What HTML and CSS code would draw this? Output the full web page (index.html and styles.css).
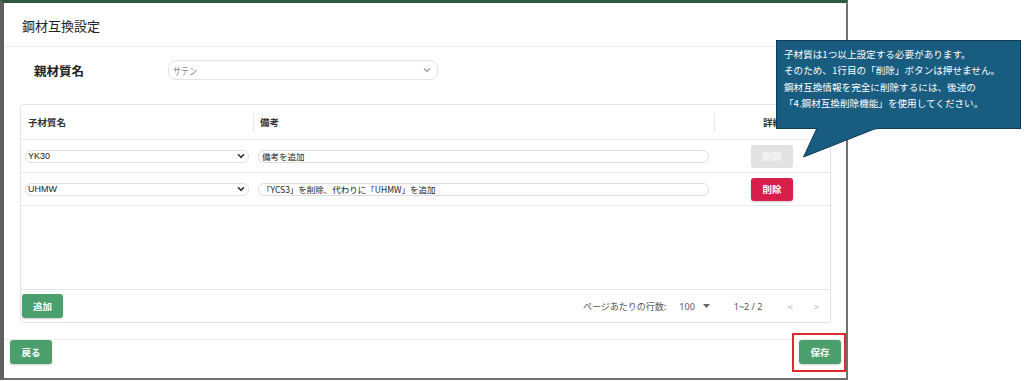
FILE: index.html
```html
<!DOCTYPE html>
<html lang="ja">
<head>
<meta charset="utf-8">
<link rel="stylesheet" href="styles.css">
</head>
<body>
<div class="page">
  <div class="screen">
    <div class="dialog">
      <div class="dlg-head">鋼材互換設定</div>
      <div class="parent-row">
        <div class="parent-label">親材質名</div>
        <div class="parent-select">
          <span class="ph">サテン</span>
          <svg class="chev" width="8" height="6" viewBox="0 0 8 6"><path d="M1 1.5 L4 4.5 L7 1.5" fill="none" stroke="#999" stroke-width="1.2"/></svg>
        </div>
      </div>
      <div class="card">
        <div class="trow thead">
          <div class="c1"><span>子材質名</span></div>
          <div class="c2"><span>備考</span></div>
          <div class="c3"><span>詳細</span></div>
        </div>
        <div class="trow">
          <div class="c1"><div class="sel">YK30<svg class="chev2" width="8" height="6" viewBox="0 0 8 6"><path d="M1 1.2 L4 4.4 L7 1.2" fill="none" stroke="#333" stroke-width="1.6"/></svg></div></div>
          <div class="c2"><div class="inp">備考を追加</div></div>
          <div class="c3"><button class="btn btn-disabled">削除</button></div>
        </div>
        <div class="trow">
          <div class="c1"><div class="sel">UHMW<svg class="chev2" width="8" height="6" viewBox="0 0 8 6"><path d="M1 1.2 L4 4.4 L7 1.2" fill="none" stroke="#333" stroke-width="1.6"/></svg></div></div>
          <div class="c2"><div class="inp">「YCS3」を削除、代わりに「UHMW」を追加</div></div>
          <div class="c3"><button class="btn btn-red">削除</button></div>
        </div>
        <div class="empty"></div>
        <div class="tfoot">
          <button class="btn btn-green">追加</button>
          <div class="pager">
            <span class="rpp">ページあたりの行数:</span>
            <span class="num">100</span>
            <svg width="7" height="4" viewBox="0 0 7 4"><path d="M0 0 L7 0 L3.5 4 Z" fill="#666"/></svg>
            <span class="range">1~2 / 2</span>
            <span class="nav">&lt;</span>
            <span class="nav last">&gt;</span>
          </div>
        </div>
      </div>
      <div class="dlg-foot">
        <button class="btn btn-green">戻る</button>
        <button class="btn btn-green">保存</button>
      </div>
    </div>
  </div>
  <div class="callout">
    <p>子材質は1つ以上設定する必要があります。</p>
    <p>そのため、1行目の「削除」ボタンは押せません。</p>
    <p>鋼材互換情報を完全に削除するには、後述の</p>
    <p>「4.鋼材互換削除機能」を使用してください。</p>
    <svg class="tail" width="80" height="32" viewBox="0 0 80 32"><path d="M14 0 L0.5 29 L74 0" fill="#185c80" stroke="#0f3b55" stroke-width="1"/><rect x="14.5" y="0" width="59" height="1.5" fill="#185c80"/></svg>
  </div>
  <div class="highlight"></div>
</div>
</body>
</html>
```
FILE: styles.css
```css
* { box-sizing: border-box; }
html, body { margin: 0; padding: 0; background: #fff; }
body { font-family: "Noto Sans CJK JP", "Noto Sans", sans-serif; color: #222; }

.page { position: relative; width: 1024px; height: 381px; }

.screen {
  width: 848px;
  height: 380px;
  border-top: 3px solid #2c5a3a;
  border-left: 4px solid #606060;
  border-right: 2px solid #707070;
  border-bottom: 2px solid #707070;
  background: #fff;
}

.dialog { display: flex; flex-direction: column; height: 100%; }

.dlg-head {
  height: 44px;
  padding: 2px 0 0 18px;
  display: flex;
  align-items: center;
  font-size: 13px;
  color: #222;
  border-bottom: 1px solid #eee;
}

.parent-row {
  display: flex;
  align-items: center;
  height: 45px;
  padding: 1px 0 0 30px;
  margin-bottom: 12px;
}
.parent-label { font-size: 12.5px; font-weight: bold; width: 134px; }
.parent-select {
  width: 270px;
  height: 20px;
  border: 1px solid #e4e4e4;
  border-radius: 8px;
  display: flex;
  align-items: center;
  justify-content: space-between;
  padding: 0 6px 0 4px;
}
.parent-select .ph { font-size: 10px; color: #888; transform: scaleX(0.8); transform-origin: left; }

.card {
  margin: 0 15px 0 16px;
  border: 1px solid #e3e3e3;
  border-radius: 3px;
  display: flex;
  flex-direction: column;
  height: 219px;
}

.trow { display: flex; height: 33px; border-bottom: 1px solid #e8e8e8; align-items: center; }
.thead { height: 35px; font-size: 9.5px; font-weight: bold; color: #333; }
.c1 { width: 232px; padding-left: 4px; }
.c2 { flex: 1; padding-left: 5px; padding-right: 5px; }
.c3 { width: 116px; display: flex; justify-content: center; }
.thead .c1 { padding-left: 7px; }
.thead .c2 { border-left: 1px solid #e8e8e8; padding-left: 6px; height: 17px; display: flex; align-items: center; }
.thead .c3 { border-left: 1px solid #e8e8e8; height: 17px; align-items: center; padding-left: 0; }

.sel {
  width: 224px;
  height: 13px;
  border: 1px solid #e0e0e0;
  border-radius: 6px;
  font-family: "Liberation Sans", "Noto Sans CJK JP", sans-serif;
  font-size: 9px;
  color: #222;
  display: flex;
  align-items: center;
  justify-content: space-between;
  padding: 0 3px 0 2px;
}
.inp {
  height: 13px;
  border: 1px solid #ddd;
  border-radius: 6px;
  font-size: 8.5px;
  color: #222;
  display: flex;
  align-items: center;
  padding-left: 3px;
}

.btn {
  font-family: "Noto Sans CJK JP", sans-serif;
  border: none;
  border-radius: 3px;
  color: #fff;
  font-size: 9.5px;
  font-weight: bold;
  width: 42px;
  height: 23px;
  padding: 0;
  box-shadow: 0 1px 2px rgba(0,0,0,0.2);
}
.btn-disabled { background: #e2e2e2; color: #f8f8f8; box-shadow: none; }
.btn-red { background: #d81e4a; }
.btn-green { background: #4b9f6d; }

.empty { height: 84px; border-bottom: 1px solid #e8e8e8; }

.tfoot {
  flex: 1;
  display: flex;
  align-items: center;
  justify-content: space-between;
  padding: 0 0 0 1px;
}
.tfoot .btn { height: 24px; width: 41px; }
.pager { display: flex; align-items: center; font-size: 9px; color: #555; padding-right: 11px; }
.pager .rpp { margin-right: 13px; }
.pager .num { margin-right: 8px; font-family: "Noto Sans", sans-serif; }
.pager svg { margin-right: 24px; }
.pager .range { margin-right: 25px; font-family: "Noto Sans", sans-serif; }
.pager .nav { color: #bbb; width: 26px; text-align: left; font-size: 10px; }
.pager .nav.last { width: auto; }

.dlg-foot {
  margin-top: 16px;
  border-top: 1px solid #eee;
  display: flex;
  justify-content: space-between;
  padding: 0 5px 0 6px;
}
.dlg-foot .btn { height: 24px; width: 42px; }

.callout {
  position: absolute;
  left: 776px;
  top: 40px;
  width: 245px;
  height: 89px;
  background: #185c80;
  border: 1px solid #0f3b55;
  padding: 5px 0 0 7px;
  color: #fff;
  font-size: 9.6px;
}
.callout p { margin: 0; line-height: 16.4px; white-space: nowrap; }
.tail { position: absolute; left: 26px; top: 87px; }

.highlight {
  position: absolute;
  left: 792px;
  top: 333px;
  width: 54px;
  height: 39px;
  border: 2px solid #e02a2a;
}
```
